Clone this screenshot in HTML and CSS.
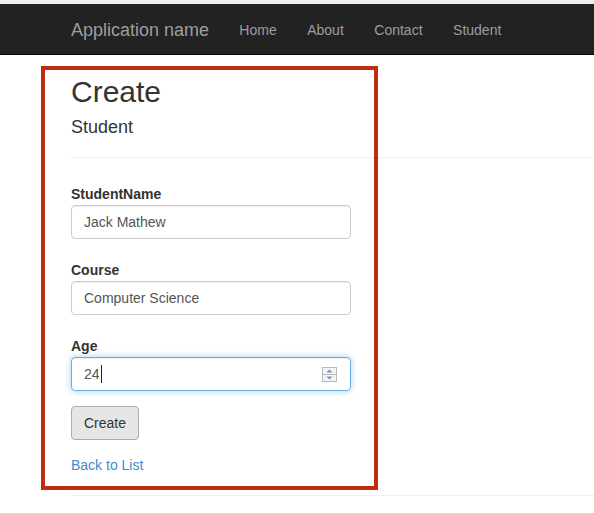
FILE: index.html
```html
<!DOCTYPE html>
<html lang="en">
<head>
  <meta charset="UTF-8" />
  <meta name="viewport" content="width=device-width, initial-scale=1.0" />
  <title>Create - Application name</title>
  <link rel="stylesheet" href="styles.css">
</head>
<body>
  <div class="top-strip"></div>
  <div class="navbar">
    <div class="container nav-inner">
      <a class="brand" href="#">Application name</a>
      <a class="nav-link" href="#">Home</a>
      <a class="nav-link" href="#">About</a>
      <a class="nav-link" href="#">Contact</a>
      <a class="nav-link" href="#">Student</a>
    </div>
  </div>

  <div class="container body-content">
    <h2>Create</h2>
    <h4>Student</h4>
    <hr />

    <div class="form-group">
      <label>StudentName</label>
      <div class="form-control">Jack Mathew</div>
    </div>
    <div class="form-group">
      <label>Course</label>
      <div class="form-control">Computer Science</div>
    </div>
    <div class="form-group">
      <label>Age</label>
      <div class="form-control focused">
        <span>24<span class="caret"></span></span>
        <svg class="spinner" width="15" height="15" viewBox="0 0 15 15">
          <rect x="0.5" y="0.5" width="14" height="14" fill="#f4f4f4" stroke="#b9b9b9" />
          <line x1="1" y1="7.5" x2="14" y2="7.5" stroke="#b9b9b9" />
          <polygon points="4.5,5.5 10.5,5.5 7.5,2.5" fill="#6f8fc9" />
          <polygon points="4.5,9.5 10.5,9.5 7.5,12.5" fill="#6f8fc9" />
        </svg>
      </div>
    </div>

    <button class="btn">Create</button>
    <p class="back"><a href="#">Back to List</a></p>
    <hr class="footer-rule" />
  </div>

  <div class="highlight"></div>
</body>
</html>
```

FILE: styles.css
```css
html, body {
  margin: 0;
}
body {
  font-family: "Liberation Sans", Arial, sans-serif;
  font-size: 14px;
  line-height: 20px;
  color: #333;
  background: #fff;
  overflow: hidden;
}
.top-strip {
  height: 4px;
  background: #f0f0f0;
}
.navbar {
  height: 50px;
  background: #222;
  border-bottom: 1px solid #080808;
}
.container {
  padding-left: 71px;
}
.nav-inner {
  display: flex;
  align-items: center;
  height: 50px;
  padding-top: 2px;
  box-sizing: border-box;
}
.brand {
  font-size: 18px;
  color: #9d9d9d;
  text-decoration: none;
  padding-right: 15px;
}
.nav-link {
  color: #9d9d9d;
  text-decoration: none;
  padding: 0 15.25px;
}
h2 {
  font-size: 30px;
  font-weight: normal;
  line-height: 33px;
  margin: 20px 0 0;
}
h4 {
  font-size: 18px;
  font-weight: normal;
  line-height: 20px;
  margin: 9px 0 0;
}
hr {
  border: 0;
  border-top: 1px solid #eee;
  margin: 20px 0 0;
}
.form-group {
  margin-top: 26px;
}
.form-group + .form-group {
  margin-top: 21px;
}
label {
  display: block;
  font-weight: bold;
  line-height: 22px;
  margin-bottom: 0;
  margin-top: -1px;
}
.form-control {
  box-sizing: border-box;
  display: flex;
  align-items: center;
  justify-content: space-between;
  width: 280px;
  height: 34px;
  padding: 0 13px 0 12px;
  border: 1px solid #ccc;
  border-radius: 4px;
  color: #555;
  box-shadow: inset 0 1px 1px rgba(0, 0, 0, 0.075);
}
.form-control.focused {
  border-color: #66afe9;
  box-shadow: inset 0 1px 1px rgba(0, 0, 0, 0.075), 0 0 6px rgba(102, 175, 233, 0.6);
}
.caret {
  display: inline-block;
  width: 1px;
  height: 18px;
  margin-left: 1px;
  background: #222;
  vertical-align: -4px;
}
.btn {
  display: block;
  margin-top: 15px;
  height: 34px;
  padding: 0 12px;
  font-family: inherit;
  font-size: 14px;
  color: #333;
  background: #e6e6e6;
  border: 1px solid #adadad;
  border-radius: 4px;
}
.back {
  margin: 15px 0 0;
}
.back a {
  color: #428bca;
  text-decoration: none;
}
.footer-rule {
  margin-top: 20px;
}
.highlight {
  position: absolute;
  left: 41px;
  top: 66px;
  width: 329px;
  height: 416px;
  border: 4px solid #bf2e0c;
}
```
